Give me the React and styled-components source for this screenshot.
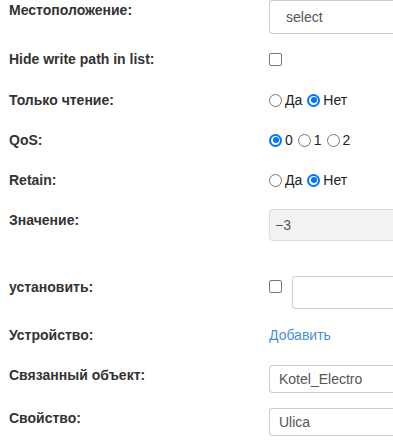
import React from "react";
import styled, { createGlobalStyle } from "styled-components";

const GlobalStyle = createGlobalStyle`
  html, body {
    margin: 0;
    padding: 0;
    background: #fff;
    overflow: hidden;
  }
  body {
    font-family: "Liberation Sans", Arial, sans-serif;
    font-size: 14px;
    line-height: 20px;
    color: #333;
  }
`;

const Form = styled.div`
  display: flex;
  flex-direction: column;
  width: 393px;
  overflow: hidden;
`;

const Row = styled.div`
  display: grid;
  grid-template-columns: 269px 124px;
  align-items: start;
  height: ${(p) => p.$h}px;
`;

const Label = styled.div`
  padding-left: 9px;
  font-weight: bold;
  color: #333;
  white-space: nowrap;
`;

const Cell = styled.div`
  display: flex;
  align-items: ${(p) => (p.$top ? "flex-start" : "center")};
  margin-top: ${(p) => p.$shift || 0}px;
  white-space: nowrap;
  min-width: 0;
  overflow: hidden;
`;

const Box = styled.div`
  box-sizing: border-box;
  width: 220px;
  flex-shrink: 0;
  height: ${(p) => p.$h}px;
  border: 1px solid ${(p) => (p.$muted ? "#dcdcdc" : "#ccc")};
  border-right: none;
  border-radius: 4px 0 0 4px;
  background: ${(p) => (p.$muted ? "#f2f2f2" : "#fff")};
  padding-left: ${(p) => p.$pad}px;
  display: flex;
  align-items: center;
  color: #555;
  font-size: 14px;
`;

const Check = styled.span`
  box-sizing: border-box;
  display: inline-block;
  width: 13px;
  height: 13px;
  border: 1px solid #767676;
  border-radius: 2px;
  background: #fff;
  flex-shrink: 0;
  margin-top: ${(p) => p.$mt || 0}px;
  margin-right: ${(p) => p.$mr || 0}px;
`;

const Radio = styled.span`
  box-sizing: border-box;
  display: inline-block;
  width: 13px;
  height: 13px;
  border-radius: 50%;
  flex-shrink: 0;
  margin: 0 3px 0 ${(p) => (p.$first ? 0 : 5)}px;
  border: ${(p) => (p.$on ? "2px solid #0075ff" : "1px solid #767676")};
  background: #fff;
  position: relative;
  &::after {
    content: "";
    display: ${(p) => (p.$on ? "block" : "none")};
    position: absolute;
    left: 1.5px;
    top: 1.5px;
    width: 6px;
    height: 6px;
    border-radius: 50%;
    background: #0075ff;
  }
`;

const Option = styled.span`
  color: #222;
  font-size: 14px;
`;

const Link = styled.a`
  color: #4a8fd6;
  text-decoration: none;
  font-size: 14px;
`;

function RadioGroup({ options, value }) {
  return (
    <>
      {options.map((o, i) => (
        <React.Fragment key={o}>
          <Radio $first={i === 0} $on={o === value} />
          <Option>{o}</Option>
        </React.Fragment>
      ))}
    </>
  );
}

export default function App() {
  return (
    <>
      <GlobalStyle />
      <Form>
        <Row $h={49}>
          <Label>Местоположение:</Label>
          <Cell>
            <Box $h={34} $pad={16}>select</Box>
          </Cell>
        </Row>
        <Row $h={41}>
          <Label>Hide write path in list:</Label>
          <Cell $shift={4}>
            <Check />
          </Cell>
        </Row>
        <Row $h={40}>
          <Label>Только чтение:</Label>
          <Cell>
            <RadioGroup options={["Да", "Нет"]} value="Нет" />
          </Cell>
        </Row>
        <Row $h={40}>
          <Label>QoS:</Label>
          <Cell>
            <RadioGroup options={["0", "1", "2"]} value="0" />
          </Cell>
        </Row>
        <Row $h={40}>
          <Label>Retain:</Label>
          <Cell>
            <RadioGroup options={["Да", "Нет"]} value="Нет" />
          </Cell>
        </Row>
        <Row $h={67}>
          <Label>Значение:</Label>
          <Cell $shift={-1}>
            <Box $h={32} $pad={5} $muted>−3</Box>
          </Cell>
        </Row>
        <Row $h={48}>
          <Label>установить:</Label>
          <Cell $shift={-1} $top>
            <Check $mt={4} $mr={10} />
            <Box $h={33} $pad={8} />
          </Cell>
        </Row>
        <Row $h={40}>
          <Label>Устройство:</Label>
          <Cell>
            <Link href="#">Добавить</Link>
          </Cell>
        </Row>
        <Row $h={43}>
          <Label>Связанный объект:</Label>
          <Cell>
            <Box $h={28} $pad={9}>Kotel_Electro</Box>
          </Cell>
        </Row>
        <Row $h={40}>
          <Label>Свойство:</Label>
          <Cell>
            <Box $h={28} $pad={9}>Ulica</Box>
          </Cell>
        </Row>
      </Form>
    </>
  );
}
